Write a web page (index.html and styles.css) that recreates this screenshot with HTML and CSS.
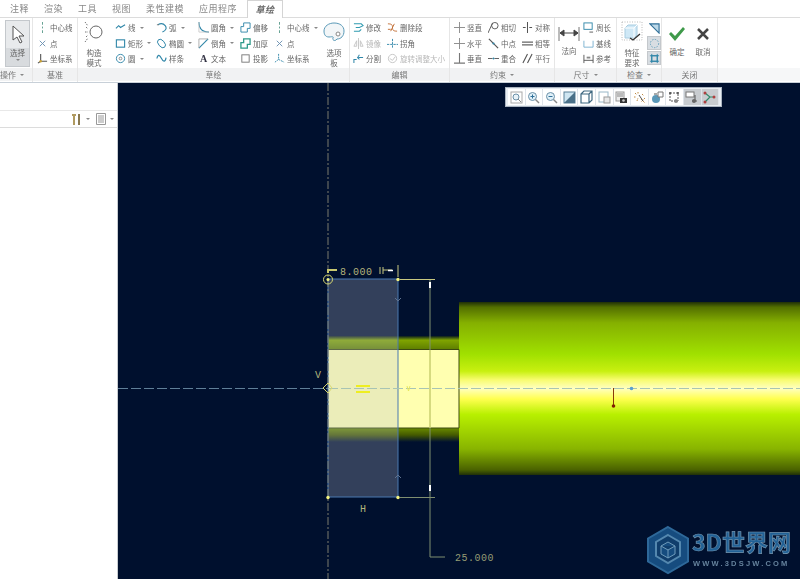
FILE: index.html
```html
<!DOCTYPE html>
<html lang="zh">
<head>
    <meta charset="UTF-8">
    <title>草绘</title>
    <link rel="stylesheet" href="styles.css">
</head>
<body>
    <svg class="defs" width="0" height="0">
        <symbol id="i-vline" viewBox="0 0 12 12"><path d="M6 0v3M6 5v2M6 9v3" stroke="#5a9a8a" fill="none"/></symbol>
        <symbol id="i-x" viewBox="0 0 12 12"><path d="M3 3l6 6M9 3l-6 6" stroke="#6a8fb0" fill="none"/></symbol>
        <symbol id="i-csys" viewBox="0 0 12 12"><path d="M4 1v8h7M4 9l-3 2" stroke="#555" stroke-width="1.2" fill="none"/><circle cx="4" cy="9" r="1.3" fill="#c9a030"/></symbol>
        <symbol id="i-line" viewBox="0 0 12 12"><path d="M1 7l3-3 2 2 5-3" stroke="#2f86a8" stroke-width="1.2" fill="none"/></symbol>
        <symbol id="i-rect" viewBox="0 0 12 12"><rect x="1.500" y="2" width="9" height="8" stroke="#2f86a8" stroke-width="1.2" fill="none"/></symbol>
        <symbol id="i-circle" viewBox="0 0 12 12"><circle cx="6" cy="6" r="4.500" stroke="#2f86a8" fill="none"/><circle cx="6" cy="6" r="1.500" stroke="#888" fill="none"/></symbol>
        <symbol id="i-arc" viewBox="0 0 12 12"><path d="M2 3q5-3 8 1t-3 7" stroke="#2f86a8" stroke-width="1.2" fill="none"/><path d="M1 3h2" stroke="#777"/></symbol>
        <symbol id="i-ellipse" viewBox="0 0 12 12"><ellipse cx="6" cy="6" rx="3.300" ry="5.300" transform="rotate(-40 6 6)" stroke="#2f86a8" fill="none"/></symbol>
        <symbol id="i-spline" viewBox="0 0 12 12"><path d="M1 6c1-5 3-4 5 0s4 4 5-1" stroke="#2f86a8" stroke-width="1.3" fill="none"/></symbol>
        <symbol id="i-fillet" viewBox="0 0 12 12"><path d="M1 0c0 7 3 11 11 11" stroke="#2f86a8" stroke-width="1.2" fill="none"/><path d="M1 0v11h11" stroke="#ccc" fill="none"/></symbol>
        <symbol id="i-chamfer" viewBox="0 0 12 12"><path d="M1 11L11 1" stroke="#2f86a8" stroke-width="1.2" fill="none"/><path d="M1 11V1h10" stroke="#aaa" fill="none"/></symbol>
        <symbol id="i-offset" viewBox="0 0 12 12"><path d="M4 1h7v6H8v4H1V5h3z" stroke="#2f86a8" fill="none"/></symbol>
        <symbol id="i-thick" viewBox="0 0 12 12"><path d="M4 1h7v6H8v4H1V5h3z" stroke="#2f9a8a" stroke-width="1.400" fill="none"/></symbol>
        <symbol id="i-project" viewBox="0 0 12 12"><rect x="2" y="2" width="8" height="8" stroke="#777" fill="none"/></symbol>
        <symbol id="i-csys2" viewBox="0 0 12 12"><path d="M1 10l4-3V1M5 7l6 3" stroke="#2f86a8" stroke-dasharray="2 1" fill="none"/></symbol>
        <symbol id="i-modify" viewBox="0 0 12 12"><path d="M1 2h8l2 2-4 2H3M1 10h6l2-2" stroke="#2f9ab0" stroke-width="1.100" fill="none"/></symbol>
        <symbol id="i-mirror" viewBox="0 0 12 12"><path d="M6 0v12M4 3L1 9h3zM8 3l3 6H8z" stroke="#c4c4c4" fill="none"/></symbol>
        <symbol id="i-split" viewBox="0 0 12 12"><path d="M1 11V7h3M6 5h5M7 2l-2 3 2 2" stroke="#2f86a8" stroke-width="1.100" fill="none"/></symbol>
        <symbol id="i-trim" viewBox="0 0 12 12"><path d="M1 2c4 0 5 1 5 4s1 4 5 4M8 2l-4 8M1 8h3" stroke="#c06a30" fill="none"/></symbol>
        <symbol id="i-corner" viewBox="0 0 12 12"><path d="M6 1v10M0 7h12" stroke="#2f86a8" stroke-dasharray="2.500 1" fill="none"/></symbol>
        <symbol id="i-rotate" viewBox="0 0 12 12"><circle cx="6" cy="6" r="4.500" stroke="#c4c4c4" fill="none"/><path d="M3 6l3 2 3-4" stroke="#c4c4c4" fill="none"/></symbol>
        <symbol id="i-plus" viewBox="0 0 12 12"><path d="M6 0v12M0 6h12" stroke="#888" fill="none"/></symbol>
        <symbol id="i-perp" viewBox="0 0 12 12"><path d="M6 0v11M0 11h12" stroke="#777" stroke-width="1.200" fill="none"/></symbol>
        <symbol id="i-tangent" viewBox="0 0 12 12"><circle cx="7.500" cy="4" r="3.500" stroke="#555" fill="none"/><path d="M0 12L5 1" stroke="#555" fill="none"/></symbol>
        <symbol id="i-mid" viewBox="0 0 12 12"><path d="M1 1l10 10" stroke="#555" stroke-width="1.300"/><circle cx="6" cy="6" r="1.200" fill="#2f86a8"/></symbol>
        <symbol id="i-coin" viewBox="0 0 12 12"><path d="M0 6h5M7 6h5" stroke="#555"/><circle cx="6" cy="6" r="1" fill="#2f86a8"/></symbol>
        <symbol id="i-sym" viewBox="0 0 12 12"><path d="M6 0v12M1 6h3M8 6h3" stroke="#555" stroke-width="1.100"/></symbol>
        <symbol id="i-equal" viewBox="0 0 12 12"><path d="M0 4.500h12M0 7.500h12" stroke="#666" stroke-width="1.200"/></symbol>
        <symbol id="i-parallel" viewBox="0 0 12 12"><path d="M1 11L6 1M6 11L11 1" stroke="#555" stroke-width="1.200"/></symbol>
        <symbol id="i-perim" viewBox="0 0 12 12"><rect x="1" y="1" width="9" height="7" stroke="#2f86a8" fill="none"/><path d="M7 11h4" stroke="#555"/></symbol>
        <symbol id="i-base" viewBox="0 0 12 12"><path d="M1 3v7h10V3" stroke="#7ab0d0" fill="none"/></symbol>
        <symbol id="i-ref" viewBox="0 0 12 12"><path d="M1 2v9M11 2v9M1 8h10" stroke="#555" fill="none"/><rect x="4" y="4" width="4" height="2" fill="#888"/></symbol>
    </svg>

    <div class="tabs">
        <span class="tab">注释</span>
        <span class="tab">渲染</span>
        <span class="tab">工具</span>
        <span class="tab">视图</span>
        <span class="tab">柔性建模</span>
        <span class="tab">应用程序</span>
        <span class="tab tab-active">草绘</span>
    </div>

    <div class="ribbon">
        <div class="group g-op">
            <div class="group-body">
                <div class="select-btn">
                    <div class="select-top">
                        <svg width="14" height="20" viewBox="0 0 14 20"><path d="M2 1v14l4-3 3 6 2-1-3-6h5z" fill="#fff" stroke="#555"/></svg>
                    </div>
                    <div class="select-bottom">选择<i class="caret"></i></div>
                </div>
            </div>
            <div class="group-label label-clip">操作<i class="caret"></i></div>
        </div>

        <div class="group g-datum">
            <div class="group-body">
                <div class="col">
                    <div class="cmd"><svg><use href="#i-vline"/></svg>中心线</div>
                    <div class="cmd"><svg><use href="#i-x"/></svg>点</div>
                    <div class="cmd"><svg><use href="#i-csys"/></svg>坐标系</div>
                </div>
            </div>
            <div class="group-label">基准</div>
        </div>

        <div class="group g-sketch">
            <div class="group-body">
                <div class="big big-construct">
                    <svg width="20" height="22" viewBox="0 0 20 22"><circle cx="12" cy="11" r="6" stroke="#666" fill="none"/><path d="M1 1l3 4M1 11h3M1 21l3-4M2 6l2 2M2 16l2-2" stroke="#777" stroke-dasharray="1.500 1"/></svg>
                    <span>构造<br>模式</span>
                </div>
                <div class="col col-line">
                    <div class="cmd"><svg><use href="#i-line"/></svg>线<i class="caret"></i></div>
                    <div class="cmd"><svg><use href="#i-rect"/></svg>矩形<i class="caret"></i></div>
                    <div class="cmd"><svg><use href="#i-circle"/></svg>圆<i class="caret"></i></div>
                </div>
                <div class="col col-arc">
                    <div class="cmd"><svg><use href="#i-arc"/></svg>弧<i class="caret"></i></div>
                    <div class="cmd"><svg><use href="#i-ellipse"/></svg>椭圆<i class="caret"></i></div>
                    <div class="cmd"><svg><use href="#i-spline"/></svg>样条</div>
                </div>
                <div class="col col-fillet">
                    <div class="cmd"><svg><use href="#i-fillet"/></svg>圆角<i class="caret"></i></div>
                    <div class="cmd"><svg><use href="#i-chamfer"/></svg>倒角<i class="caret"></i></div>
                    <div class="cmd"><b class="glyph">A</b>文本</div>
                </div>
                <div class="col col-offset">
                    <div class="cmd"><svg><use href="#i-offset"/></svg>偏移</div>
                    <div class="cmd"><svg><use href="#i-thick"/></svg>加厚</div>
                    <div class="cmd"><svg><use href="#i-project"/></svg>投影</div>
                </div>
                <div class="col col-center">
                    <div class="cmd"><svg><use href="#i-vline"/></svg>中心线<i class="caret"></i></div>
                    <div class="cmd"><svg><use href="#i-x"/></svg>点</div>
                    <div class="cmd"><svg><use href="#i-csys2"/></svg>坐标系</div>
                </div>
                <div class="big big-palette">
                    <svg width="22" height="24" viewBox="0 0 22 24"><path d="M11 2c6 0 10 3 10 8s-3 8-7 8c-2 3-5 1-4-1 1-2-2-1-4-1-4 0-5-3-5-6 0-5 5-8 10-8z" fill="#f2f6f8" stroke="#5a9ab8"/><circle cx="15" cy="13" r="2" fill="#fff" stroke="#888"/></svg>
                    <span>选项<br>板</span>
                </div>
            </div>
            <div class="group-label">草绘</div>
        </div>

        <div class="group g-edit">
            <div class="group-body">
                <div class="col col-modify">
                    <div class="cmd"><svg><use href="#i-modify"/></svg>修改</div>
                    <div class="cmd cmd-off"><svg><use href="#i-mirror"/></svg>镜像</div>
                    <div class="cmd"><svg><use href="#i-split"/></svg>分割</div>
                </div>
                <div class="col">
                    <div class="cmd"><svg><use href="#i-trim"/></svg>删除段</div>
                    <div class="cmd"><svg><use href="#i-corner"/></svg>拐角</div>
                    <div class="cmd cmd-off"><svg><use href="#i-rotate"/></svg>旋转调整大小</div>
                </div>
            </div>
            <div class="group-label">编辑</div>
        </div>

        <div class="group g-cons">
            <div class="group-body">
                <div class="col col-cons">
                    <div class="cmd"><svg><use href="#i-plus"/></svg>竖直</div>
                    <div class="cmd"><svg><use href="#i-plus"/></svg>水平</div>
                    <div class="cmd"><svg><use href="#i-perp"/></svg>垂直</div>
                </div>
                <div class="col col-cons">
                    <div class="cmd"><svg><use href="#i-tangent"/></svg>相切</div>
                    <div class="cmd"><svg><use href="#i-mid"/></svg>中点</div>
                    <div class="cmd"><svg><use href="#i-coin"/></svg>重合</div>
                </div>
                <div class="col">
                    <div class="cmd"><svg><use href="#i-sym"/></svg>对称</div>
                    <div class="cmd"><svg><use href="#i-equal"/></svg>相等</div>
                    <div class="cmd"><svg><use href="#i-parallel"/></svg>平行</div>
                </div>
            </div>
            <div class="group-label">约束<i class="caret"></i></div>
        </div>

        <div class="group g-dim">
            <div class="group-body">
                <div class="big big-normal">
                    <svg width="22" height="16" viewBox="0 0 22 16"><path d="M1 1v14M21 1v14" stroke="#777"/><path d="M2 7h18M6 4L2 7l4 3zM16 4l4 3-4 3z" stroke="#444" fill="#444"/></svg>
                    <span>法向</span>
                </div>
                <div class="col">
                    <div class="cmd"><svg><use href="#i-perim"/></svg>周长</div>
                    <div class="cmd"><svg><use href="#i-base"/></svg>基线</div>
                    <div class="cmd"><svg><use href="#i-ref"/></svg>参考</div>
                </div>
            </div>
            <div class="group-label">尺寸<i class="caret"></i></div>
        </div>

        <div class="group g-check">
            <div class="group-body">
                <div class="big big-feature">
                    <svg width="22" height="21" viewBox="0 0 22 21"><path d="M1 1h20v18H1z" stroke="#bbb" stroke-dasharray="1 1.500" fill="none"/><path d="M4 7l3-3h9v10l-3 3H4z" fill="#cfe8f6" stroke="#a8cce0"/><path d="M4 7h9v10M13 7l3-3" stroke="#fff" fill="none"/><path d="M9 17l3 2 7-6" stroke="#333" stroke-width="1.300" fill="none"/></svg>
                    <span>特征<br>要求</span>
                </div>
                <div class="check-col">
                    <div class="check-btn"><svg width="11" height="11" viewBox="0 0 12 12"><path d="M1 1h10v10zM1 1l10 10" stroke="#2f6f98" stroke-width="1.200" fill="#bcd8e8"/></svg></div>
                    <div class="check-btn check-on"><svg width="11" height="11" viewBox="0 0 12 12"><circle cx="6" cy="6" r="4.500" stroke="#5a9ab8" stroke-dasharray="1.500 1.500" fill="none"/></svg></div>
                    <div class="check-btn check-on"><svg width="11" height="11" viewBox="0 0 12 12"><rect x="3" y="3" width="6" height="6" stroke="#2f86a8" stroke-width="1.500" fill="none"/><path d="M1 3h2M9 3h2M1 9h2M9 9h2M3 1v2M9 1v2M3 9v2M9 9v2" stroke="#2f86a8"/></svg></div>
                </div>
            </div>
            <div class="group-label">检查<i class="caret"></i></div>
        </div>

        <div class="group g-close">
            <div class="group-body">
                <div class="big big-ok">
                    <svg width="18" height="14" viewBox="0 0 18 14"><path d="M1 7l2-2 4 4 8-9 2 2L7 14z" fill="#3f9a4a"/></svg>
                    <span>确定</span>
                </div>
                <div class="big big-ok">
                    <svg width="14" height="14" viewBox="0 0 14 14"><path d="M2 2l10 10M12 2L2 12" stroke="#444" stroke-width="2.500"/></svg>
                    <span>取消</span>
                </div>
            </div>
            <div class="group-label">关闭</div>
        </div>
        <div class="group-rest"></div>
    </div>

    <div class="main">
        <div class="side">
            <div class="side-bar">
                <svg width="11" height="13" viewBox="0 0 11 13"><path d="M1 1h4v2H4v9H2V3H1z" fill="#b09a60"/><path d="M7 1h2v11H7z" fill="#8a7a50"/></svg>
                <i class="caret"></i>
                <svg class="side-doc" width="10" height="12" viewBox="0 0 10 12"><path d="M.5.500h9v11h-9zM2 3h6M2 5h6M2 7h6M2 9h6" stroke="#999" fill="#fff"/></svg>
                <i class="caret"></i>
            </div>
        </div>

        <div class="canvas">
            <svg class="drawing" viewBox="118 82 682 497" width="682" height="497">
                <defs>
                    <linearGradient id="shaft" x1="0" y1="0" x2="0" y2="1">
                        <stop offset="0" stop-color="#1f2f08"/>
                        <stop offset=".03" stop-color="#536f00"/>
                        <stop offset=".12" stop-color="#85b000"/>
                        <stop offset=".3" stop-color="#a0e000"/>
                        <stop offset=".4" stop-color="#c8f010"/>
                        <stop offset=".45" stop-color="#f8fc70"/>
                        <stop offset=".5" stop-color="#ffffc0"/>
                        <stop offset=".56" stop-color="#ffff50"/>
                        <stop offset=".65" stop-color="#b8f000"/>
                        <stop offset=".85" stop-color="#88b400"/>
                        <stop offset=".97" stop-color="#4a6200"/>
                        <stop offset="1" stop-color="#1f2f08"/>
                    </linearGradient>
                    <linearGradient id="collar-top" x1="0" y1="0" x2="0" y2="1">
                        <stop offset="0" stop-color="#0a1c20"/>
                        <stop offset=".3" stop-color="#80a400"/>
                        <stop offset="1" stop-color="#5c7c00"/>
                    </linearGradient>
                    <linearGradient id="collar-bot" x1="0" y1="0" x2="0" y2="1">
                        <stop offset="0" stop-color="#6a8a00"/>
                        <stop offset=".5" stop-color="#445a00"/>
                        <stop offset="1" stop-color="#001030"/>
                    </linearGradient>
                </defs>

                <rect x="459" y="301" width="341" height="173" fill="url(#shaft)"/>
                <rect x="328" y="335" width="131" height="14" fill="url(#collar-top)"/>
                <rect x="328" y="427" width="131" height="14" fill="url(#collar-bot)"/>
                <rect x="328" y="349" width="131" height="78" fill="#ffffb0"/>
                <path d="M328 348.500H459V427H328" stroke="#3c4a10" fill="none"/>

                <rect x="328" y="278" width="70" height="218" fill="#b6bed2" fill-opacity=".28" stroke="#4a78b0"/>

                <path d="M328 82V579" stroke="#7a7a6c" stroke-dasharray="8 2 2 2" fill="none"/>
                <path d="M118 387.500H328" stroke="#5f7f98" stroke-dasharray="10 3" fill="none"/>
                <path d="M328 387.500H800" stroke="#a8c4b4" stroke-dasharray="10 3" fill="none"/>
                <path d="M430 278V556H445" stroke="#7f8f70" fill="none"/>
                <path d="M430 349V427" stroke="#eeee70" fill="none"/>
                <path d="M400 278.500H435" stroke="#c8c880" fill="none"/>
                <path d="M400 496.500H435" stroke="#7f8f70" fill="none"/>
                <path d="M430 281v6M430 484v6" stroke="#fff" stroke-width="2" fill="none"/>
                <path d="M395 297l3 3 3-3M395 477l3-3 3 3" stroke="#5f7390" fill="none"/>

                <path d="M328 272v-3h4M332 269h5" stroke="#c8c870" stroke-width="2" fill="none"/>
                <circle cx="328" cy="278.500" r="4.500" stroke="#d8d870" fill="none"/>
                <circle cx="328" cy="278.500" r="1.500" fill="#f4f480"/>
                <circle cx="398" cy="278.500" r="1.700" fill="#f4f480"/>
                <circle cx="328" cy="496.500" r="1.700" fill="#f4f480"/>
                <circle cx="398" cy="496.500" r="1.700" fill="#f4f480"/>

                <path d="M380 266v7M383 266v7M383 269h9M398 264v12" stroke="#c8c880" fill="none"/>
                <path d="M388 269.500h5" stroke="#fff" stroke-width="1.500" fill="none"/>
                <path d="M328 382l-5 5 5 5 4-5z" stroke="#d8d870" fill="none"/>
                <path d="M356 385h14M356 391h14" stroke="#eeee20" stroke-width="2" fill="none"/>
                <path d="M407 385l1.500 5 1.500-5" stroke="#e8e860" fill="none"/>

                <path d="M613.500 387V405" stroke="#8a3a08" fill="none"/>
                <circle cx="613.500" cy="405" r="1.800" fill="#802000"/>
                <circle cx="631.500" cy="387.500" r="1.800" fill="#5aa0d0"/>

                <text class="dim" x="340" y="274">8.000</text>
                <text class="dim" x="315" y="377">V</text>
                <text class="dim" x="360" y="511">H</text>
                <text class="dim dim-low" x="455" y="560">25.000</text>

                <!-- logo -->
                <g class="logo">
                    <path d="M668 526l20 11.500v23L668 572l-20-11.500v-23z" fill="#1c5c94" stroke="#3a7fb4" stroke-width="2"/>
                    <path d="M668 534l12 7v14l-12 7-12-7v-14z" fill="#154a7c" stroke="#6aa6d0" stroke-width="2"/>
                    <path d="M668 541l7 4v8l-7 4-7-4v-8zM661 545l7 4 7-4M668 549v8" fill="#1c5c94" stroke="#8cc0e0"/>
                    <text class="logo-big" x="692" y="550">3D世界网</text>
                    <text class="logo-small" x="693" y="565">WWW.3DSJW.COM</text>
                </g>
            </svg>

            <div class="view-bar">
                <div class="view-btn"><svg width="13" height="13" viewBox="0 0 13 13"><rect x="1" y="1" width="11" height="11" stroke="#aaa" fill="none"/><circle cx="6" cy="6" r="3" stroke="#6a90a8" fill="#e8f2f8"/><path d="M8 8l3 3" stroke="#888"/></svg></div>
                <div class="view-btn"><svg width="13" height="13" viewBox="0 0 13 13"><circle cx="5.500" cy="5.500" r="4" stroke="#6a90a8" fill="#e0f0f8"/><path d="M3.500 5.500h4M5.500 3.500v4" stroke="#2f6f98"/><path d="M8.500 8.500l3.500 3.500" stroke="#888" stroke-width="1.400"/></svg></div>
                <div class="view-btn"><svg width="13" height="13" viewBox="0 0 13 13"><circle cx="5.500" cy="5.500" r="4" stroke="#6a90a8" fill="#e0f0f8"/><path d="M3.500 5.500h4" stroke="#2f6f98"/><path d="M8.500 8.500l3.500 3.500" stroke="#888" stroke-width="1.400"/></svg></div>
                <div class="view-btn"><svg width="13" height="13" viewBox="0 0 13 13"><rect x="1" y="1" width="11" height="11" fill="#cfe6f2" stroke="#5a8098"/><path d="M1 12L12 1v11z" fill="#4a7088"/></svg></div>
                <div class="view-btn"><svg width="14" height="14" viewBox="0 0 14 14"><path d="M1 4l3-3h8v9l-3 3H1zM1 4h8v9M9 4l3-3" stroke="#3f6880" stroke-width="1.200" fill="#fff"/></svg></div>
                <div class="view-btn"><svg width="13" height="13" viewBox="0 0 13 13"><rect x="1" y="1" width="9" height="10" stroke="#9ab8c8" fill="#fff"/><rect x="6" y="6" width="6" height="6" stroke="#999" fill="#e8e8e8"/></svg></div>
                <div class="view-btn"><svg width="13" height="13" viewBox="0 0 13 13"><rect x="1" y="1" width="8" height="9" stroke="#999" fill="#eee"/><path d="M2 3h6M2 5h6" stroke="#888"/><rect x="5" y="7" width="7" height="5" fill="#333"/><circle cx="8.500" cy="9.500" r="1.300" fill="#ccc"/></svg></div>
                <div class="view-btn"><svg width="13" height="13" viewBox="0 0 13 13"><path d="M2 2l2 2M1 6h2M5 1v2M8 8l4 4M12 7l-4 4M9 3l2 2M4 10l1-3" stroke="#c08a40" stroke-dasharray="1.500 1" fill="none"/><path d="M6 4l4 6" stroke="#555"/></svg></div>
                <div class="view-btn"><svg width="13" height="13" viewBox="0 0 13 13"><circle cx="5" cy="8" r="4" fill="#5a98b8"/><path d="M7 1h5v5H7z" stroke="#777" fill="#fff"/><path d="M3 3h3" stroke="#555"/></svg></div>
                <div class="view-btn"><svg width="13" height="13" viewBox="0 0 13 13"><path d="M2 2h8v8H2z" stroke="#555" stroke-dasharray="2 1" fill="none"/><circle cx="2" cy="2" r="1" fill="#444"/><circle cx="10" cy="2" r="1" fill="#444"/><circle cx="8" cy="10" r="2" fill="#888"/></svg></div>
                <div class="view-btn view-on"><svg width="14" height="13" viewBox="0 0 14 13"><rect x="1" y="1" width="8" height="5" stroke="#777" fill="#fff"/><path d="M10 4v6M7 10h5" stroke="#555"/><circle cx="9" cy="10" r="2" fill="#666"/></svg></div>
                <div class="view-btn view-on"><svg width="13" height="13" viewBox="0 0 13 13"><path d="M2 2l5 4-5 5M7 6h4" stroke="#2f8a6a" stroke-width="1.200" fill="none"/><circle cx="2" cy="2" r="1.500" fill="#b04040"/><circle cx="2" cy="11" r="1.500" fill="#b04040"/><circle cx="11" cy="6" r="1.500" fill="#b04040"/></svg></div>
            </div>
        </div>
    </div>
</body>
</html>
```

FILE: styles.css
```css
html, body {
    margin: 0;
    height: 100%;
    overflow: hidden;
}
body {
    width: 800px;
    height: 579px;
    background: #fff;
    color: #666;
    font-family: "Noto Sans CJK SC", "Noto Sans", sans-serif;
    font-size: 7.5px;
    line-height: 1;
}
.defs {
    position: absolute;
}

/* tabs */
.tabs {
    height: 18px;
    box-sizing: border-box;
    padding-left: 10px;
    display: flex;
    align-items: center;
    gap: 15px;
    background: #fff;
    border-bottom: 1px solid #dcdcdc;
    font-size: 9px;
    letter-spacing: .5px;
    color: #888;
    filter: blur(.4px);
}
.tab-active {
    height: 18px;
    box-sizing: border-box;
    width: 36px;
    margin-left: -5px;
    display: flex;
    align-items: center;
    justify-content: center;
    background: #fff;
    border: 1px solid #d4d4d4;
    border-bottom: 0;
    font-style: italic;
    font-weight: bold;
    color: #666;
}

/* ribbon */
.ribbon {
    display: flex;
    height: 64px;
    border-bottom: 1px solid #c8d0d8;
    filter: blur(.4px);
}
.group {
    display: flex;
    flex-direction: column;
    box-sizing: border-box;
    border-right: 1px solid #e6e6e6;
}
.group-body {
    height: 50px;
    box-sizing: border-box;
    padding-top: 2px;
    display: flex;
    background: #fff;
}
.group-label {
    height: 13px;
    display: flex;
    align-items: center;
    justify-content: center;
    background: #f1f2f3;
    font-size: 8px;
    color: #777;
}
.group-rest {
    flex: 1;
    display: flex;
    flex-direction: column;
}
.group-rest::before {
    content: "";
    height: 50px;
}
.group-rest::after {
    content: "";
    height: 13px;
    background: #f6f7f8;
}
.label-clip {
    justify-content: flex-start;
}
.g-op { width: 33px; }
.g-datum { width: 45px; }
.g-sketch { width: 272px; }
.g-edit { width: 100px; }
.g-cons { width: 105px; }
.g-dim { width: 62px; }
.g-check { width: 45px; }
.g-close { width: 56px; }

.col {
    display: flex;
    flex-direction: column;
    padding-top: 0;
}
.cmd {
    height: 15.5px;
    display: flex;
    align-items: center;
    white-space: nowrap;
}
.cmd svg {
    width: 11px;
    height: 11px;
    margin-right: 2px;
    flex: none;
}
.cmd-off {
    color: #b8b8b8;
}
.glyph {
    width: 11px;
    margin-right: 2px;
    text-align: center;
    font-family: "Liberation Serif", serif;
    font-size: 10px;
    color: #334;
}
.caret {
    display: inline-block;
    width: 0;
    height: 0;
    margin-left: 4px;
    border: 2px solid transparent;
    border-top: 2.5px solid #888;
    border-bottom: 0;
}

/* select button */
.select-btn {
    width: 25px;
    height: 47px;
    margin-left: 5px;
    box-sizing: border-box;
    border: 1px solid #c4c8cc;
    display: flex;
    flex-direction: column;
    align-items: center;
    background: #e8eaec;
}
.select-top {
    height: 27px;
    padding-top: 4px;
    box-sizing: border-box;
}
.select-bottom {
    flex: 1;
    width: 100%;
    display: flex;
    flex-direction: column;
    align-items: center;
    gap: 2px;
    padding-top: 1px;
    box-sizing: border-box;
    background: #d8dbde;
}
.select-bottom .caret {
    margin: 0;
}
.g-datum .col {
    padding-left: 4px;
}

/* large buttons */
.big {
    display: flex;
    flex-direction: column;
    align-items: center;
    text-align: center;
    line-height: 9.5px;
    padding-top: 1px;
}
.big span {
    margin-top: auto;
    padding-bottom: 1px;
}
.big-construct {
    width: 22px;
    margin: 0 10px 0 5px;
}
.col-line { width: 41px; }
.col-arc { width: 42px; }
.col-fillet { width: 42px; }
.col-offset { width: 34px; }
.col-center { width: 49px; }
.big-palette {
    width: 22px;
}
.col-modify {
    width: 34px;
    margin-left: 3px;
}
.col-cons {
    width: 32px;
    margin-left: 4px;
}
.col-cons + .col {
    margin-left: 2px;
}
.big-normal {
    width: 22px;
    margin: 5px 3px 0 3px;
}
.big-normal span {
    margin-top: 4px;
}
.big-feature {
    width: 24px;
    margin-left: 3px;
}
.check-col {
    margin: 1px 0 0 3px;
    display: flex;
    flex-direction: column;
    gap: 1px;
}
.check-btn {
    width: 14px;
    height: 14px;
    display: flex;
    align-items: center;
    justify-content: center;
}
.check-on {
    background: #d8dde2;
    border: 1px solid #c4c8cc;
    box-sizing: border-box;
}
.big-ok {
    width: 20px;
    flex: none;
    margin: 6px 0 0 5px;
}
.big-ok + .big-ok {
    margin-left: 6px;
}
.big-ok span {
    margin-top: 6px;
}

/* main area */
.main {
    display: flex;
    height: 497px;
}
.side {
    width: 118px;
    flex: none;
    box-sizing: border-box;
    padding-top: 27px;
    border-right: 1px solid #c8ccd0;
    background: #fff;
}
.side-bar {
    height: 18px;
    box-sizing: border-box;
    display: flex;
    align-items: center;
    justify-content: flex-end;
    padding-right: 3px;
    border-top: 1px solid #e8e8e8;
    border-bottom: 1px solid #dcdcdc;
    filter: blur(.3px);
}
.side-doc {
    margin-left: 6px;
}
.canvas {
    position: relative;
    flex: 1;
    background: #00102e;
    overflow: hidden;
}
.drawing {
    display: block;
}
.dim {
    font-family: "Liberation Mono", monospace;
    font-size: 10px;
    letter-spacing: .5px;
    fill: #b4b47c;
}
.dim-low {
    fill: #969c74;
}
.logo {
    opacity: .8;
}
.logo-big {
    font-family: "Noto Sans CJK SC", sans-serif;
    font-size: 23px;
    font-weight: bold;
    fill: #2a76b0;
    stroke: #8fb4cc;
    stroke-width: .7px;
}
.logo-small {
    font-family: "Liberation Sans", sans-serif;
    font-size: 7.5px;
    font-weight: bold;
    letter-spacing: 2.2px;
    fill: #7f9fb8;
}

/* floating view toolbar */
.view-bar {
    position: absolute;
    left: 387px;
    top: 4px;
    height: 20px;
    box-sizing: border-box;
    padding: 1px 2px;
    display: flex;
    background: #e8edf2;
    border: 1px solid #aab4c0;
    filter: blur(.3px);
}
.view-btn {
    width: 17.6px;
    box-sizing: border-box;
    display: flex;
    align-items: center;
    justify-content: center;
    background: #fff;
    border-right: 1px solid #dfe4ea;
}
.view-on {
    background: #c8ccd0;
}
```
